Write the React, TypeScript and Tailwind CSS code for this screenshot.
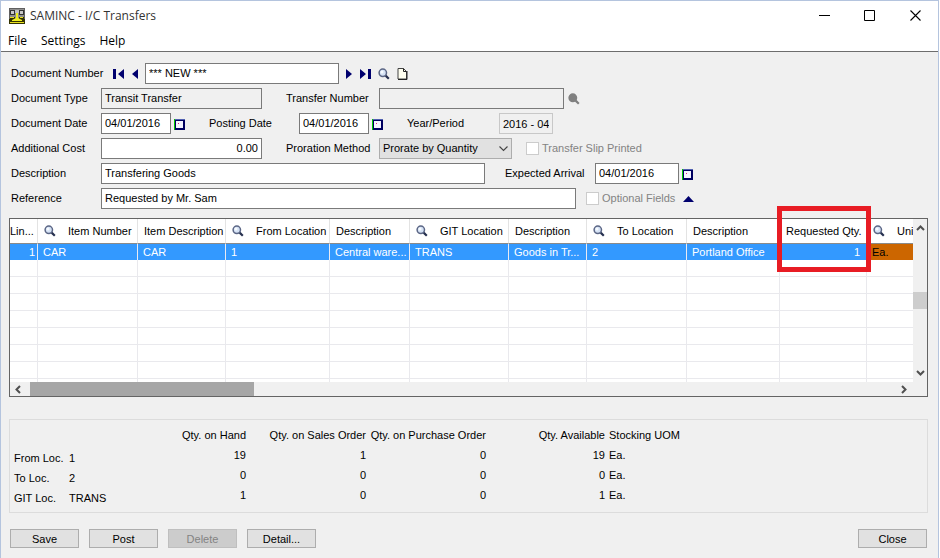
import { ReactNode } from 'react';

interface Column {
  title: string;
  width: string;
  value: string;
  finder?: boolean;
  numeric?: boolean;
}

const columns: Column[] = [
  { title: 'Lin...', width: 'w-[28px]', value: '1', numeric: true },
  { title: 'Item Number', width: 'w-[100px]', value: 'CAR', finder: true },
  { title: 'Item Description', width: 'w-[88px]', value: 'CAR' },
  { title: 'From Location', width: 'w-[104px]', value: '1', finder: true },
  { title: 'Description', width: 'w-[80px]', value: 'Central ware...' },
  { title: 'GIT Location', width: 'w-[99px]', value: 'TRANS', finder: true },
  { title: 'Description', width: 'w-[78px]', value: 'Goods in Tr...' },
  { title: 'To Location', width: 'w-[100px]', value: '2', finder: true },
  { title: 'Description', width: 'w-[93px]', value: 'Portland Office' },
  { title: 'Requested Qty.', width: 'w-[87px]', value: '1', numeric: true },
  { title: 'Uni', width: '', value: 'Ea.', finder: true },
];

const emptyRows = [1, 2, 3, 4, 5, 6, 7];

const quantities = [
  { label: 'From Loc.', code: '1', values: ['19', '1', '0', '19'] },
  { label: 'To Loc.', code: '2', values: ['0', '0', '0', '0'] },
  { label: 'GIT Loc.', code: 'TRANS', values: ['1', '0', '0', '1'] },
];

const fieldBase =
  'h-[21px] shrink-0 border border-[#7a7a7a] px-[3px] pb-[2px] outline-none';

const FinderIcon = ({ disabled = false }: { disabled?: boolean }) => (
  <svg width="12" height="12" viewBox="0 0 12 12" className="shrink-0">
    <path
      d="M7.6 7.6 10.8 10.8"
      stroke={disabled ? '#808080' : '#26304f'}
      strokeWidth="2.2"
    />
    <circle
      cx="4.8"
      cy="4.8"
      r="3.7"
      fill={disabled ? '#808080' : '#d5e2f5'}
      stroke={disabled ? '#808080' : '#5b6685'}
      strokeWidth="1.5"
    />
    {!disabled && <circle cx="4" cy="4" r="1.5" fill="#f7fbff" />}
  </svg>
);

const CalendarIcon = () => (
  <svg width="11" height="11" viewBox="0 0 11 11">
    <path d="M0 0H1V11H0Z" fill="#00c800" />
    <path d="M1 0H11V11H1Z" fill="#000060" />
    <path d="M1 0H11V1H1Z" fill="#5060b0" />
    <path d="M2 2H9V9H2Z" fill="#f4f4ff" />
    <path d="M4 4H5V5H4Z" fill="#e02080" />
  </svg>
);

const NavIcon = ({ d, width }: { d: string; width: number }) => (
  <svg width={width} height="10" viewBox={`0 0 ${width} 10`}>
    <path d={d} fill="#00006e" />
  </svg>
);

const AppIcon = () => (
  <svg width="16" height="16" viewBox="0 0 16 16">
    <path d="M0 0H16V11H0Z" fill="#8f8f8f" />
    <path d="M0 0H16V1H0ZM15 0H16V11H15ZM0 0H1V11H0Z" fill="#606060" />
    <path d="M1 2H6V7H1Z" fill="#333" />
    <path d="M2 3H5V6H2Z" fill="#c8c8c8" />
    <path d="M10 2H15V7H10Z" fill="#333" />
    <path d="M11 3H14V6H11Z" fill="#c8c8c8" />
    <path d="M6 2H10V5H6Z" fill="#c0c0c0" />
    <path d="M1 9H6V11H1ZM10 9H15V11H10Z" fill="#333300" />
    <path d="M0 11H16V16H0Z" fill="#333300" />
    <path d="M7 5H9V10L13 12V13H3V12L7 10Z" fill="#f0f020" />
    <path d="M1 9H5V10H1ZM1 14H15V15H1ZM11 9H14V10H11Z" fill="#e8e020" />
  </svg>
);

const IconButton = ({
  label,
  className = '',
  disabled,
  children,
}: {
  label: string;
  className?: string;
  disabled?: boolean;
  children: ReactNode;
}) => (
  <button
    type="button"
    aria-label={label}
    disabled={disabled}
    className={`flex shrink-0 items-center justify-center ${className}`}
  >
    {children}
  </button>
);

const DateField = ({
  id,
  value,
  width,
}: {
  id: string;
  value: string;
  width: string;
}) => (
  <>
    <input id={id} defaultValue={value} className={`${fieldBase} bg-white ${width}`} />
    <IconButton label="Calendar" className="ml-[3px] pt-[2px]">
      <CalendarIcon />
    </IconButton>
  </>
);

const PushButton = ({ text, disabled }: { text: string; disabled?: boolean }) => (
  <button
    type="button"
    disabled={disabled}
    className="h-[19px] w-[69px] border border-[#adadad] bg-[#e1e1e1] leading-[16px] disabled:border-[#bfbfbf] disabled:bg-[#cccccc] disabled:text-[#838383]"
  >
    {text}
  </button>
);

const TitleBar = () => (
  <header className="flex h-[29px] items-center bg-white pl-2">
    <AppIcon />
    <h1 className="ml-[5px] font-['Open_Sans',sans-serif] text-[12px] text-[#333]">
      SAMINC - I/C Transfers
    </h1>
    <div className="ml-auto flex">
      <IconButton label="Minimize" className="h-7 w-[46px]">
        <svg width="11" height="11" viewBox="0 0 11 11">
          <path d="M0 5.5H11" stroke="#000" />
        </svg>
      </IconButton>
      <IconButton label="Maximize" className="h-7 w-[45px]">
        <svg width="11" height="11" viewBox="0 0 11 11">
          <path d="M.5.5H10.5V10.5H.5Z" fill="none" stroke="#000" />
        </svg>
      </IconButton>
      <IconButton label="Close window" className="h-7 w-[46px]">
        <svg width="11" height="11" viewBox="0 0 11 11">
          <path d="M.5.5 10.5 10.5M10.5.5.5 10.5" stroke="#000" strokeWidth="1.1" />
        </svg>
      </IconButton>
    </div>
  </header>
);

const MenuBar = () => (
  <nav className="flex h-[22px] items-center gap-[14px] border-b border-[#6d6d6d] bg-white pl-[7px] font-['Open_Sans',sans-serif] text-[12px]">
    <button type="button">File</button>
    <button type="button">Settings</button>
    <button type="button">Help</button>
  </nav>
);

const TransferForm = () => (
  <form className="flex flex-col gap-1 pt-[11px] pl-[2px] whitespace-nowrap">
    <div className="flex items-center">
      <label htmlFor="docNumber" className="w-[102px]">
        Document Number
      </label>
      <IconButton label="First" className="w-[11px]">
        <NavIcon width={11} d="M0 0H3V10H0ZM11 0V10L5 5Z" />
      </IconButton>
      <IconButton label="Previous" className="mr-[7px] ml-[7px] w-[7px]">
        <NavIcon width={6} d="M6 0V10L0 5Z" />
      </IconButton>
      <input
        id="docNumber"
        defaultValue="*** NEW ***"
        className={`${fieldBase} w-[194px] bg-white`}
      />
      <IconButton label="Next" className="mr-[8px] ml-[6px] w-[7px]">
        <NavIcon width={6} d="M0 0V10L6 5Z" />
      </IconButton>
      <IconButton label="Last" className="w-[11px]">
        <NavIcon width={11} d="M0 0V10L6 5ZM8 0H11V10H8Z" />
      </IconButton>
      <IconButton label="Find document" className="ml-[7px]">
        <FinderIcon />
      </IconButton>
      <IconButton label="New document" className="ml-[7px]">
        <svg width="11" height="12" viewBox="0 0 11 12">
          <path d="M1 .5H6.5L9.5 3.5V11H1Z" fill="#fffff0" stroke="#444" />
          <path d="M6.5.5V3.5H9.5M10 3V11.5H1" fill="none" stroke="#222" />
        </svg>
      </IconButton>
    </div>

    <div className="flex items-center">
      <label htmlFor="docType" className="w-[90px]">
        Document Type
      </label>
      <input
        id="docType"
        readOnly
        defaultValue="Transit Transfer"
        className={`${fieldBase} w-[161px]`}
      />
      <label htmlFor="transferNumber" className="ml-6 w-[93px]">
        Transfer Number
      </label>
      <input id="transferNumber" readOnly className={`${fieldBase} w-[185px]`} />
      <IconButton label="Find transfer" disabled className="ml-[4px]">
        <FinderIcon disabled />
      </IconButton>
    </div>

    <div className="flex items-center">
      <label htmlFor="docDate" className="w-[90px]">
        Document Date
      </label>
      <DateField id="docDate" value="04/01/2016" width="w-[70px]" />
      <label htmlFor="postingDate" className="ml-6 w-[90px]">
        Posting Date
      </label>
      <DateField id="postingDate" value="04/01/2016" width="w-[70px]" />
      <label htmlFor="yearPeriod" className="ml-6 w-[92px]">
        Year/Period
      </label>
      <input
        id="yearPeriod"
        readOnly
        defaultValue="2016 - 04"
        className="h-[21px] w-[54px] border border-[#c8c8c8] px-[3px] outline-none"
      />
    </div>

    <div className="flex items-center">
      <label htmlFor="additionalCost" className="w-[90px]">
        Additional Cost
      </label>
      <input
        id="additionalCost"
        defaultValue="0.00"
        className={`${fieldBase} w-[161px] bg-white text-right`}
      />
      <label htmlFor="proration" className="ml-6 w-[93px]">
        Proration Method
      </label>
      <div className="relative">
        <select
          id="proration"
          className="block h-[21px] w-[133px] appearance-none border border-[#adadad] bg-[#e1e1e1] px-[3px] outline-none"
        >
          <option>Prorate by Quantity</option>
        </select>
        <svg
          width="9"
          height="6"
          viewBox="0 0 9 6"
          className="pointer-events-none absolute top-2 right-1"
        >
          <path d="M.5.5 4.5 4.5 8.5.5" fill="none" stroke="#444" strokeWidth="1.1" />
        </svg>
      </div>
      <label className="ml-[14px] flex items-center gap-[3px] text-[#838383]">
        <input
          type="checkbox"
          disabled
          className="size-[13px] appearance-none border border-[#ccc] bg-white"
        />
        Transfer Slip Printed
      </label>
    </div>

    <div className="flex items-center">
      <label htmlFor="description" className="w-[90px]">
        Description
      </label>
      <input
        id="description"
        defaultValue="Transfering Goods"
        className={`${fieldBase} w-[384px] bg-white`}
      />
      <label htmlFor="arrival" className="ml-5 w-[90px]">
        Expected Arrival
      </label>
      <DateField id="arrival" value="04/01/2016" width="w-[84px]" />
    </div>

    <div className="flex items-center">
      <label htmlFor="reference" className="w-[90px]">
        Reference
      </label>
      <input
        id="reference"
        defaultValue="Requested by Mr. Sam"
        className={`${fieldBase} w-[475px] bg-white`}
      />
      <label className="ml-[10px] flex w-[97px] items-center gap-[3px] text-[#838383]">
        <input
          type="checkbox"
          disabled
          className="size-[13px] appearance-none border border-[#ccc] bg-white"
        />
        Optional Fields
      </label>
      <IconButton label="Optional fields">
        <svg width="11" height="6" viewBox="0 0 11 6">
          <path d="M5.5 0 11 6H0Z" fill="#00006e" />
        </svg>
      </IconButton>
    </div>
  </form>
);

const cellColor = (column: Column) =>
  column.title === 'Uni' ? 'bg-[#cc6600] text-black' : 'bg-[#3399ff] text-white';

const Chevron = ({ d }: { d: string }) => (
  <svg width="9" height="9" viewBox="0 0 9 9" className="shrink-0">
    <path d={d} fill="none" stroke="#505050" strokeWidth="2" />
  </svg>
);

const DetailGrid = () => (
  <div className="relative mt-[9px] border border-[#646464]">
    <div className="flex">
      <div className="h-[163px] min-w-0 flex-1 overflow-hidden bg-white">
        <table className="w-full table-fixed border-separate border-spacing-0">
          <thead>
            <tr className="h-[25px]">
              {columns.map((column, index) => (
                <th
                  key={index}
                  className={`overflow-hidden border-r border-b border-r-[#e3e3e3] border-b-[#8a8a8a] p-0 text-left font-normal whitespace-nowrap last:border-r-0 ${column.width}`}
                >
                  <div
                    className={`flex items-center gap-3 ${index === 0 ? '' : 'pl-[6px]'}`}
                  >
                    {column.finder && <FinderIcon />}
                    {column.title}
                  </div>
                </th>
              ))}
            </tr>
          </thead>
          <tbody>
            <tr className="h-[16px]">
              {columns.map((column, index) => (
                <td
                  key={index}
                  className={`overflow-hidden border-r border-[#eaeaf2] py-0 leading-[16px] whitespace-nowrap last:border-r-0 ${cellColor(column)} ${
                    column.numeric ? 'text-right' : 'pl-[5px]'
                  } ${index === 9 ? 'pr-[6px]' : 'pr-[2px]'}`}
                >
                  {column.value}
                </td>
              ))}
            </tr>
            {emptyRows.map((row) => (
              <tr key={row} className="h-[17px]">
                {columns.map((_, index) => (
                  <td
                    key={index}
                    className="border-r border-b border-[#e9e9ed] p-0 last:border-r-0"
                  />
                ))}
              </tr>
            ))}
            <tr className="h-[4px]">
              {columns.map((_, index) => (
                <td key={index} className="border-r border-[#e9e9ed] p-0 last:border-r-0" />
              ))}
            </tr>
          </tbody>
        </table>
      </div>
      <div className="flex w-[14px] flex-col items-center py-[5px]">
        <Chevron d="M1 6 4.5 2.5 8 6" />
        <div className="mt-[59px] mb-auto h-[17px] w-[14px] bg-[#cdcdcd]" />
        <Chevron d="M1 3 4.5 6.5 8 3" />
      </div>
    </div>
    <div className="flex h-[14px] items-center pr-[19px] pl-[4px]">
      <Chevron d="M6 1 2.5 4.5 6 8" />
      <div className="ml-[7px] h-[14px] w-[224px] bg-[#a6a6a6]" />
      <div className="flex-1" />
      <Chevron d="M3 1 6.5 4.5 3 8" />
    </div>
    <div className="pointer-events-none absolute -top-[13px] left-[767px] h-[66px] w-[94px] border-[5px] border-[#e81c24]" />
  </div>
);

const QuantityPanel = () => (
  <section className="mt-[22px] h-[94px] border border-[#dcdcdc] pt-[5px]">
    <table className="w-full table-fixed border-collapse text-right leading-[14px]">
      <thead>
        <tr className="h-5 whitespace-nowrap">
          <td className="w-[59px] p-0" />
          <td className="w-[58px] p-0" />
          <th className="w-[119px] p-0 font-normal">Qty. on Hand</th>
          <th className="w-[120px] p-0 font-normal">Qty. on Sales Order</th>
          <th className="w-[120px] p-0 font-normal">Qty. on Purchase Order</th>
          <th className="w-[119px] p-0 font-normal">Qty. Available</th>
          <th className="p-0 pl-[4px] text-left font-normal">Stocking UOM</th>
        </tr>
      </thead>
      <tbody>
        {quantities.map(({ label, code, values }) => (
          <tr key={label} className="h-5">
            <th className="p-0 pt-[6px] pl-[4px] text-left font-normal">{label}</th>
            <td className="p-0 pt-[6px] text-left">{code}</td>
            {values.map((value, index) => (
              <td key={index} className="p-0">
                {value}
              </td>
            ))}
            <td className="p-0 pl-[4px] text-left">Ea.</td>
          </tr>
        ))}
      </tbody>
    </table>
  </section>
);

export default function App() {
  return (
    <div className="mr-px min-h-screen border-x border-t border-[#b4c4de] bg-[#f0f0f0] font-['Liberation_Sans',sans-serif] text-[11px] text-black">
      <TitleBar />
      <MenuBar />
      <main className="pr-[10px] pl-2">
        <TransferForm />
        <DetailGrid />
        <QuantityPanel />
        <footer className="mt-4 flex gap-[10px] pr-px pl-px">
          <PushButton text="Save" />
          <PushButton text="Post" />
          <PushButton text="Delete" disabled />
          <PushButton text="Detail..." />
          <div className="ml-auto">
            <PushButton text="Close" />
          </div>
        </footer>
      </main>
    </div>
  );
}
